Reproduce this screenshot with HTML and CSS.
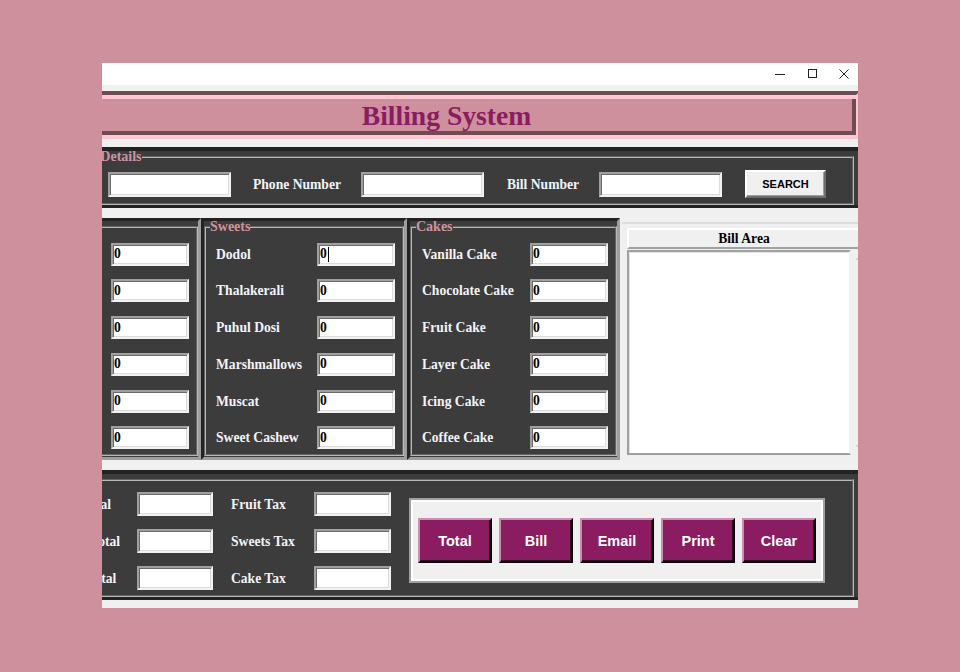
FILE: index.html
```html
<!DOCTYPE html>
<html lang="en">
<head>
<meta charset="utf-8">
<title>Billing System</title>
<link rel="stylesheet" href="styles.css">
</head>
<body>
<div class="window">
  <div class="titlebar">
    <span class="ctl"><svg width="10" height="10" viewBox="0 0 10 10"><path d="M0 5.5H10" stroke="#222" stroke-width="1"/></svg></span>
    <span class="ctl"><svg width="10" height="10" viewBox="0 0 10 10"><rect x="1.5" y="0.5" width="8" height="8" fill="none" stroke="#222" stroke-width="1"/></svg></span>
    <span class="ctl"><svg width="10" height="10" viewBox="0 0 10 10"><path d="M0.5 0.5L9.5 9.5M9.5 0.5L0.5 9.5" stroke="#222" stroke-width="1"/></svg></span>
  </div>
  <div class="client">
    <div class="app">
      <h1 class="header">Billing System</h1>

      <section class="frame details">
        <fieldset class="group">
          <legend class="legend-details">Customer Details</legend>
          <div class="details-row">
            <span class="lbl">Customer Name</span>
            <div class="entry entry-lg"></div>
            <span class="lbl">Phone Number</span>
            <div class="entry entry-lg"></div>
            <span class="lbl">Bill Number</span>
            <div class="entry entry-lg"></div>
            <button class="search">SEARCH</button>
          </div>
        </fieldset>
      </section>

      <div class="main">
        <section class="panel panel-narrow">
          <fieldset class="group">
            <legend>Fruits</legend>
            <div class="items items-narrow">
              <span class="lbl">Apple</span><div class="entry entry-sm">0</div>
              <span class="lbl">Orange</span><div class="entry entry-sm">0</div>
              <span class="lbl">Mango</span><div class="entry entry-sm">0</div>
              <span class="lbl">Banana</span><div class="entry entry-sm">0</div>
              <span class="lbl">Grapes</span><div class="entry entry-sm">0</div>
              <span class="lbl">Papaya</span><div class="entry entry-sm">0</div>
            </div>
          </fieldset>
        </section>
        <section class="panel panel-narrow">
          <fieldset class="group">
            <legend>Sweets</legend>
            <div class="items items-narrow">
              <span class="lbl">Dodol</span><div class="entry entry-sm">0<span class="caret"></span></div>
              <span class="lbl">Thalakerali</span><div class="entry entry-sm">0</div>
              <span class="lbl">Puhul Dosi</span><div class="entry entry-sm">0</div>
              <span class="lbl">Marshmallows</span><div class="entry entry-sm">0</div>
              <span class="lbl">Muscat</span><div class="entry entry-sm">0</div>
              <span class="lbl">Sweet Cashew</span><div class="entry entry-sm">0</div>
            </div>
          </fieldset>
        </section>
        <section class="panel panel-wide">
          <fieldset class="group">
            <legend>Cakes</legend>
            <div class="items items-wide">
              <span class="lbl">Vanilla Cake</span><div class="entry entry-sm">0</div>
              <span class="lbl">Chocolate Cake</span><div class="entry entry-sm">0</div>
              <span class="lbl">Fruit Cake</span><div class="entry entry-sm">0</div>
              <span class="lbl">Layer Cake</span><div class="entry entry-sm">0</div>
              <span class="lbl">Icing Cake</span><div class="entry entry-sm">0</div>
              <span class="lbl">Coffee Cake</span><div class="entry entry-sm">0</div>
            </div>
          </fieldset>
        </section>
        <section class="bill">
          <div class="bill-title">Bill Area</div>
          <div class="bill-body">
            <div class="bill-text"></div>
            <div class="scrollbar">
              <svg width="17" height="17" viewBox="0 0 17 17"><path d="M5 10L8.5 6.5L12 10" fill="none" stroke="#bdbdbd" stroke-width="1"/></svg>
              <svg width="17" height="17" viewBox="0 0 17 17"><path d="M5 7L8.5 10.5L12 7" fill="none" stroke="#bdbdbd" stroke-width="1"/></svg>
            </div>
          </div>
        </section>
      </div>

      <section class="frame menu">
        <fieldset class="group">
          <legend>Bill Menu</legend>
          <div class="menu-row">
            <div class="pairs pairs-total">
              <span class="lbl">Fruit Total</span><div class="entry entry-md"></div>
              <span class="lbl">Sweets Total</span><div class="entry entry-md"></div>
              <span class="lbl">Cakes Total</span><div class="entry entry-md"></div>
            </div>
            <div class="pairs pairs-tax">
              <span class="lbl">Fruit Tax</span><div class="entry entry-md"></div>
              <span class="lbl">Sweets Tax</span><div class="entry entry-md"></div>
              <span class="lbl">Cake Tax</span><div class="entry entry-md"></div>
            </div>
            <div class="actions">
              <button class="act">Total</button>
              <button class="act">Bill</button>
              <button class="act">Email</button>
              <button class="act">Print</button>
              <button class="act">Clear</button>
            </div>
          </div>
        </fieldset>
      </section>
    </div>
  </div>
</div>
</body>
</html>
```

FILE: styles.css
```css
* { box-sizing: border-box; }

html, body {
  margin: 0;
  height: 100%;
  background: #cd909c;
}

body {
  padding: 63px 0 0 102px;
  font-family: "Liberation Serif", "Times New Roman", serif;
}

.window {
  width: 756px;
  height: 545px;
  display: flex;
  flex-direction: column;
  background: #f0f0f0;
}

.titlebar {
  height: 22px;
  flex: none;
  background: #ffffff;
  display: flex;
  justify-content: flex-end;
  align-items: center;
  gap: 22px;
  padding: 0 9px 0 0;
}

.ctl {
  width: 10px;
  height: 10px;
  display: flex;
}

.client {
  flex: 1;
  overflow: hidden;
  padding-top: 6px;
}

.app {
  width: 896px;
  margin-left: -140px;
  display: flex;
  flex-direction: column;
}

/* ---------- Header ---------- */
.header {
  margin: 0 -2px 0 71px;
  height: 48px;
  border: 4px solid;
  border-color: #6f4b54 #fdc6d1 #fdc6d1 #6f4b54;
  box-shadow: inset 4px 4px 0 #fdc6d1, inset -4px -4px 0 #6f4b54;
  background: #cd909c;
  color: #8b1c62;
  font: bold 27.6px/41px "Liberation Serif", "Times New Roman", serif;
  text-align: center;
}

/* ---------- Common ---------- */
.lbl {
  color: #f3f3f7;
  font-weight: bold;
  font-size: 13.6px;
  white-space: nowrap;
}

.group {
  margin: 0;
  min-width: 0;
  border: 2px groove #b8b8b8;
  padding: 0 7px 0 4px;
}

.group legend {
  padding: 0;
  color: #d0929e;
  font-weight: bold;
  font-size: 14px;
  line-height: 12px;
  white-space: nowrap;
}

.entry {
  background: #ffffff;
  border: 2px solid;
  border-color: #a0a0a0 #f2f2f2 #f2f2f2 #a0a0a0;
  box-shadow: inset 1px 1px 0 #6a6a6a, inset -1px -1px 0 #dcdcdc;
  color: #000;
  font-weight: bold;
  font-size: 13.6px;
  padding-left: 1px;
  display: flex;
  align-items: center;
}

.entry-lg { width: 123px; height: 25px; }
.entry-sm { width: 78px; height: 23px; }
.entry-md { width: 76px; height: 24px; }

.caret {
  display: inline-block;
  width: 1px;
  height: 15px;
  background: #000;
  margin-left: 1px;
}

/* ---------- Dark frames ---------- */
.frame {
  background: #3c3c3c;
  border-top: 4px solid #232323;
  border-bottom: 3px solid #232323;
  padding: 0 4px 0 8px;
}

.details { margin-top: 8px; }

.legend-details { margin-left: 62px; }

.details-row {
  display: grid;
  grid-template-columns: 91px 123px 86px 124px 70px 124px 81px;
  column-gap: 22px;
  align-items: center;
  height: 28px;
  margin: 7px 0 5px 19px;
}

.details-row .lbl { padding-top: 1px; }

.search {
  width: 81px;
  height: 28px;
  background: #f0f0f0;
  border: 2px solid;
  border-color: #ffffff #6d6d6d #6d6d6d #ffffff;
  box-shadow: inset -1px -1px 0 #a0a0a0;
  font: bold 11px "Liberation Sans", Arial, sans-serif;
  color: #000;
  padding: 0;
}

/* ---------- Main row ---------- */
.main {
  margin-top: 10px;
  display: flex;
  align-items: flex-start;
  padding-left: 33px;
}

.panel {
  flex: none;
  background: #3c3c3c;
  border: 3px solid;
  border-color: #232323 #9e9e9e #9e9e9e #232323;
  padding: 0 0 1px 0;
}

.panel-narrow { width: 206px; }
.panel-wide { width: 213px; margin-right: 2px; }

.items {
  display: grid;
  grid-auto-rows: 23px;
  row-gap: 13.8px;
  align-items: center;
  padding: 9.5px 0 4.5px 6px;
}

.items .lbl { padding-top: 1px; }

.items-narrow { grid-template-columns: 101px 78px; }
.items-wide { grid-template-columns: 108px 78px; }

/* ---------- Bill area ---------- */
.bill {
  flex: none;
  width: 250px;
  height: 238px;
  margin-top: 4px;
  border-top: 2px solid #dcdcdc;
  padding: 4px 5px 5px 5px;
  display: flex;
  flex-direction: column;
}

.bill-title {
  width: 234px;
  height: 21px;
  flex: none;
  background: #f0f0f0;
  border: 2px solid;
  border-color: #ffffff #a0a0a0 #a0a0a0 #ffffff;
  font-weight: bold;
  font-size: 13.6px;
  color: #000;
  text-align: center;
  line-height: 18px;
}

.bill-body {
  margin-top: 1px;
  flex: 1;
  width: 241px;
  display: flex;
}

.bill-text {
  width: 224px;
  background: #ffffff;
  border: 2px solid;
  border-color: #a0a0a0 #f0f0f0 #a0a0a0 #a0a0a0;
  box-shadow: inset 1px 1px 0 #e3e3e3;
}

.scrollbar {
  width: 17px;
  background: #f0f0f0;
  display: flex;
  flex-direction: column;
  justify-content: space-between;
}

/* ---------- Bottom menu ---------- */
.menu { margin-top: 10px; }

.menu .group legend { line-height: 11px; }

.menu-row {
  display: flex;
  align-items: flex-start;
  gap: 18px;
  padding: 7px 0 5px 72px;
}

.pairs {
  display: grid;
  grid-auto-rows: 24px;
  row-gap: 13px;
  align-items: center;
}

.pairs .lbl { padding-top: 1px; }

.pairs-total { grid-template-columns: 89px 76px; }
.pairs-tax { grid-template-columns: 83px 77px; }
.pairs-tax .entry-md { width: 77px; }

.actions {
  margin-top: 6px;
  width: 416px;
  height: 85px;
  background: #f0f0f0;
  border: 2px solid #a0a0a0;
  box-shadow: inset 2px 2px 0 #ffffff, inset -2px -2px 0 #ffffff;
  padding: 18px 5px 0 7px;
  display: flex;
  gap: 7px;
  align-items: flex-start;
}

.act {
  width: 74px;
  height: 45px;
  background: #8b1c62;
  color: #ffffff;
  border: 2px solid;
  border-color: #c88fb1 #000000 #000000 #c88fb1;
  box-shadow: inset -1px -1px 0 #3a0a28;
  font: bold 14.5px "Liberation Sans", Arial, sans-serif;
  padding: 0;
}
```
